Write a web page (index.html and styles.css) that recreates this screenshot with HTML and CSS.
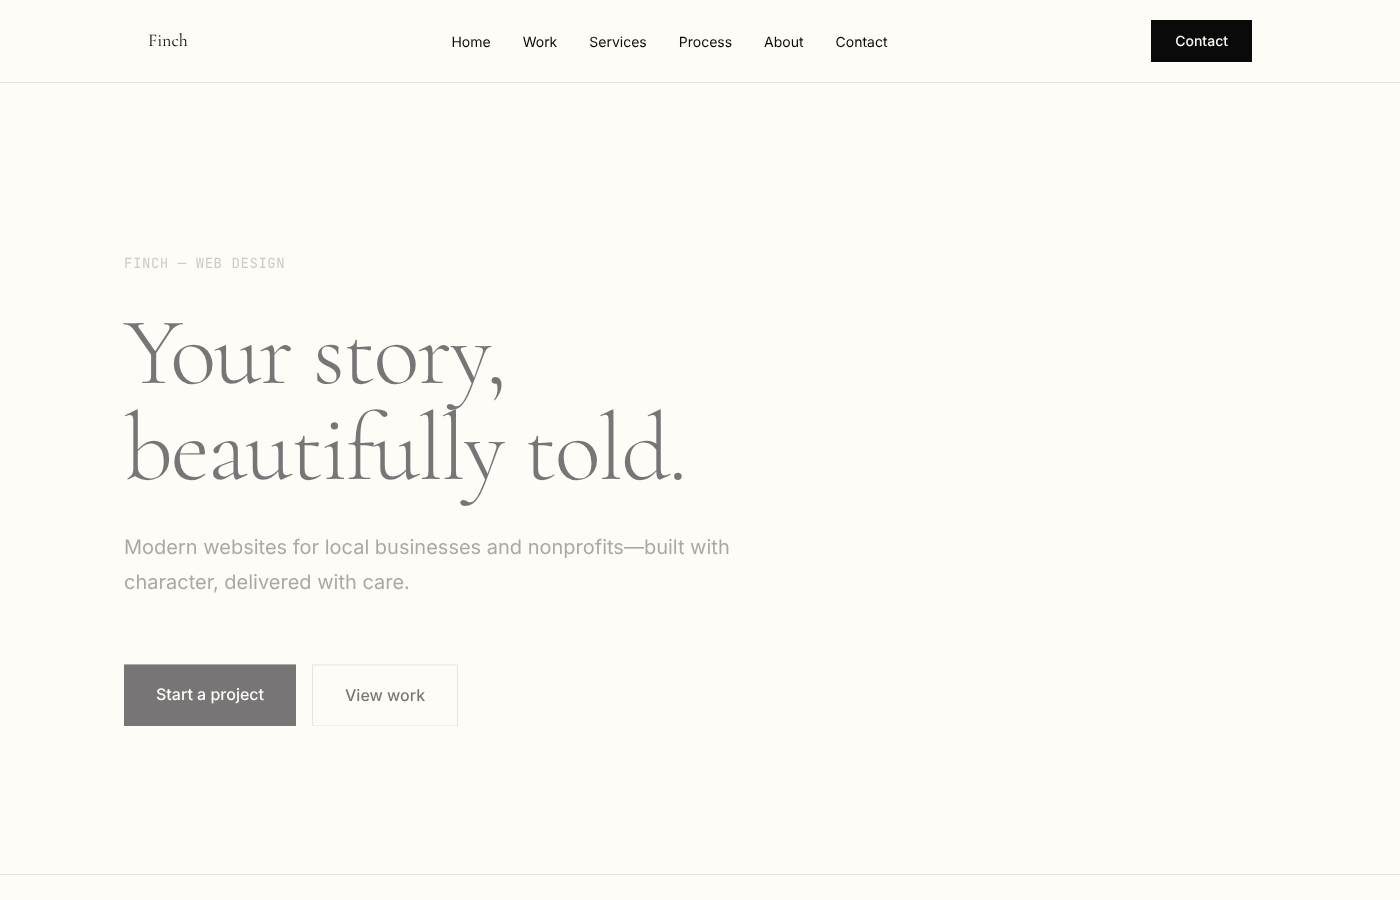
FILE: index.html
```html
<!DOCTYPE html>
<html lang="en">
<head>
    <meta charset="UTF-8">
    <meta name="viewport" content="width=device-width, initial-scale=1.0">
    <title>Finch</title>
    <link rel="stylesheet" href="styles.css">
</head>
<body>
    <header class="site-header">
        <div class="nav-inner">
            <a class="logo" href="#">Finch</a>
            <nav class="nav-links">
                <a href="#">Home</a>
                <a href="#">Work</a>
                <a href="#">Services</a>
                <a href="#">Process</a>
                <a href="#">About</a>
                <a href="#">Contact</a>
            </nav>
            <a class="nav-btn" href="#">Contact</a>
        </div>
    </header>

    <section class="hero">
        <div class="hero-inner">
            <p class="eyebrow">FINCH — WEB DESIGN</p>
            <h1>Your story,<br>beautifully told.</h1>
            <p class="lead">Modern websites for local businesses and nonprofits—built with character, delivered with care.</p>
            <div class="hero-actions">
                <a class="btn btn-solid" href="#">Start a project</a>
                <a class="btn btn-outline" href="#">View work</a>
            </div>
        </div>
    </section>
</body>
</html>
```

FILE: styles.css
```css
* {
    box-sizing: border-box;
}

body {
    margin: 0;
    background: #fffbf7;
    color: #0a0a0a;
    font-family: Inter, "Liberation Sans", sans-serif;
    text-rendering: geometricPrecision;
}

a {
    color: inherit;
    text-decoration: none;
}

/* Header */
.site-header {
    height: 83px;
    border-bottom: 1px solid #e5e5e0;
    will-change: opacity;
}

.nav-inner {
    max-width: 1152px;
    height: 82px;
    margin: 0 auto;
    padding: 0 24px;
    display: flex;
    align-items: center;
    justify-content: space-between;
}

.logo {
    font-family: "Cormorant Garamond", Cormorant, "Liberation Serif", serif;
    font-size: 18px;
    line-height: 28px;
}

.nav-links {
    display: flex;
    gap: 32px;
    font-size: 14px;
    line-height: 20px;
    margin-top: 3px;
}

.nav-btn {
    background: #0a0a0a;
    color: #fffbf7;
    font-size: 14px;
    font-weight: 500;
    line-height: 20px;
    padding: 12px 24px 10px;
}

/* Hero */
.hero {
    height: 792px;
    padding-top: 22px;
    border-bottom: 1px solid #e5e5e0;
    display: flex;
    align-items: center;
}

/* hero is mid fade-in in the picture */
.hero-inner {
    width: 1152px;
    margin: 0 auto;
    opacity: 0.555;
    transform: translateY(0.4px);
    will-change: transform, opacity;
}

.eyebrow {
    margin: 0 0 30px;
    font-family: "JetBrains Mono", "IBM Plex Mono", "Liberation Mono", monospace;
    font-size: 14px;
    line-height: 22px;
    letter-spacing: 0.04em;
    color: #a3a3a3;
}

h1 {
    margin: 0 0 33px;
    font-family: "Cormorant Garamond", Cormorant, "Liberation Serif", serif;
    font-size: 96px;
    font-weight: 300;
    line-height: 96px;
    letter-spacing: -0.02em;
    color: #0a0a10;
}

.lead {
    margin: 0 0 64px;
    max-width: 672px;
    font-size: 20px;
    line-height: 35px;
    color: #666668;
}

.hero-actions {
    display: flex;
    gap: 16px;
}

.btn {
    padding: 18px 32px;
    font-size: 16px;
    font-weight: 500;
    line-height: 24px;
}

.btn-solid {
    background: #0a0a10;
    color: #fffbf7;
}

.btn-outline {
    border: 1px solid #d6d3d1;
    color: #0a0a10;
}
```
